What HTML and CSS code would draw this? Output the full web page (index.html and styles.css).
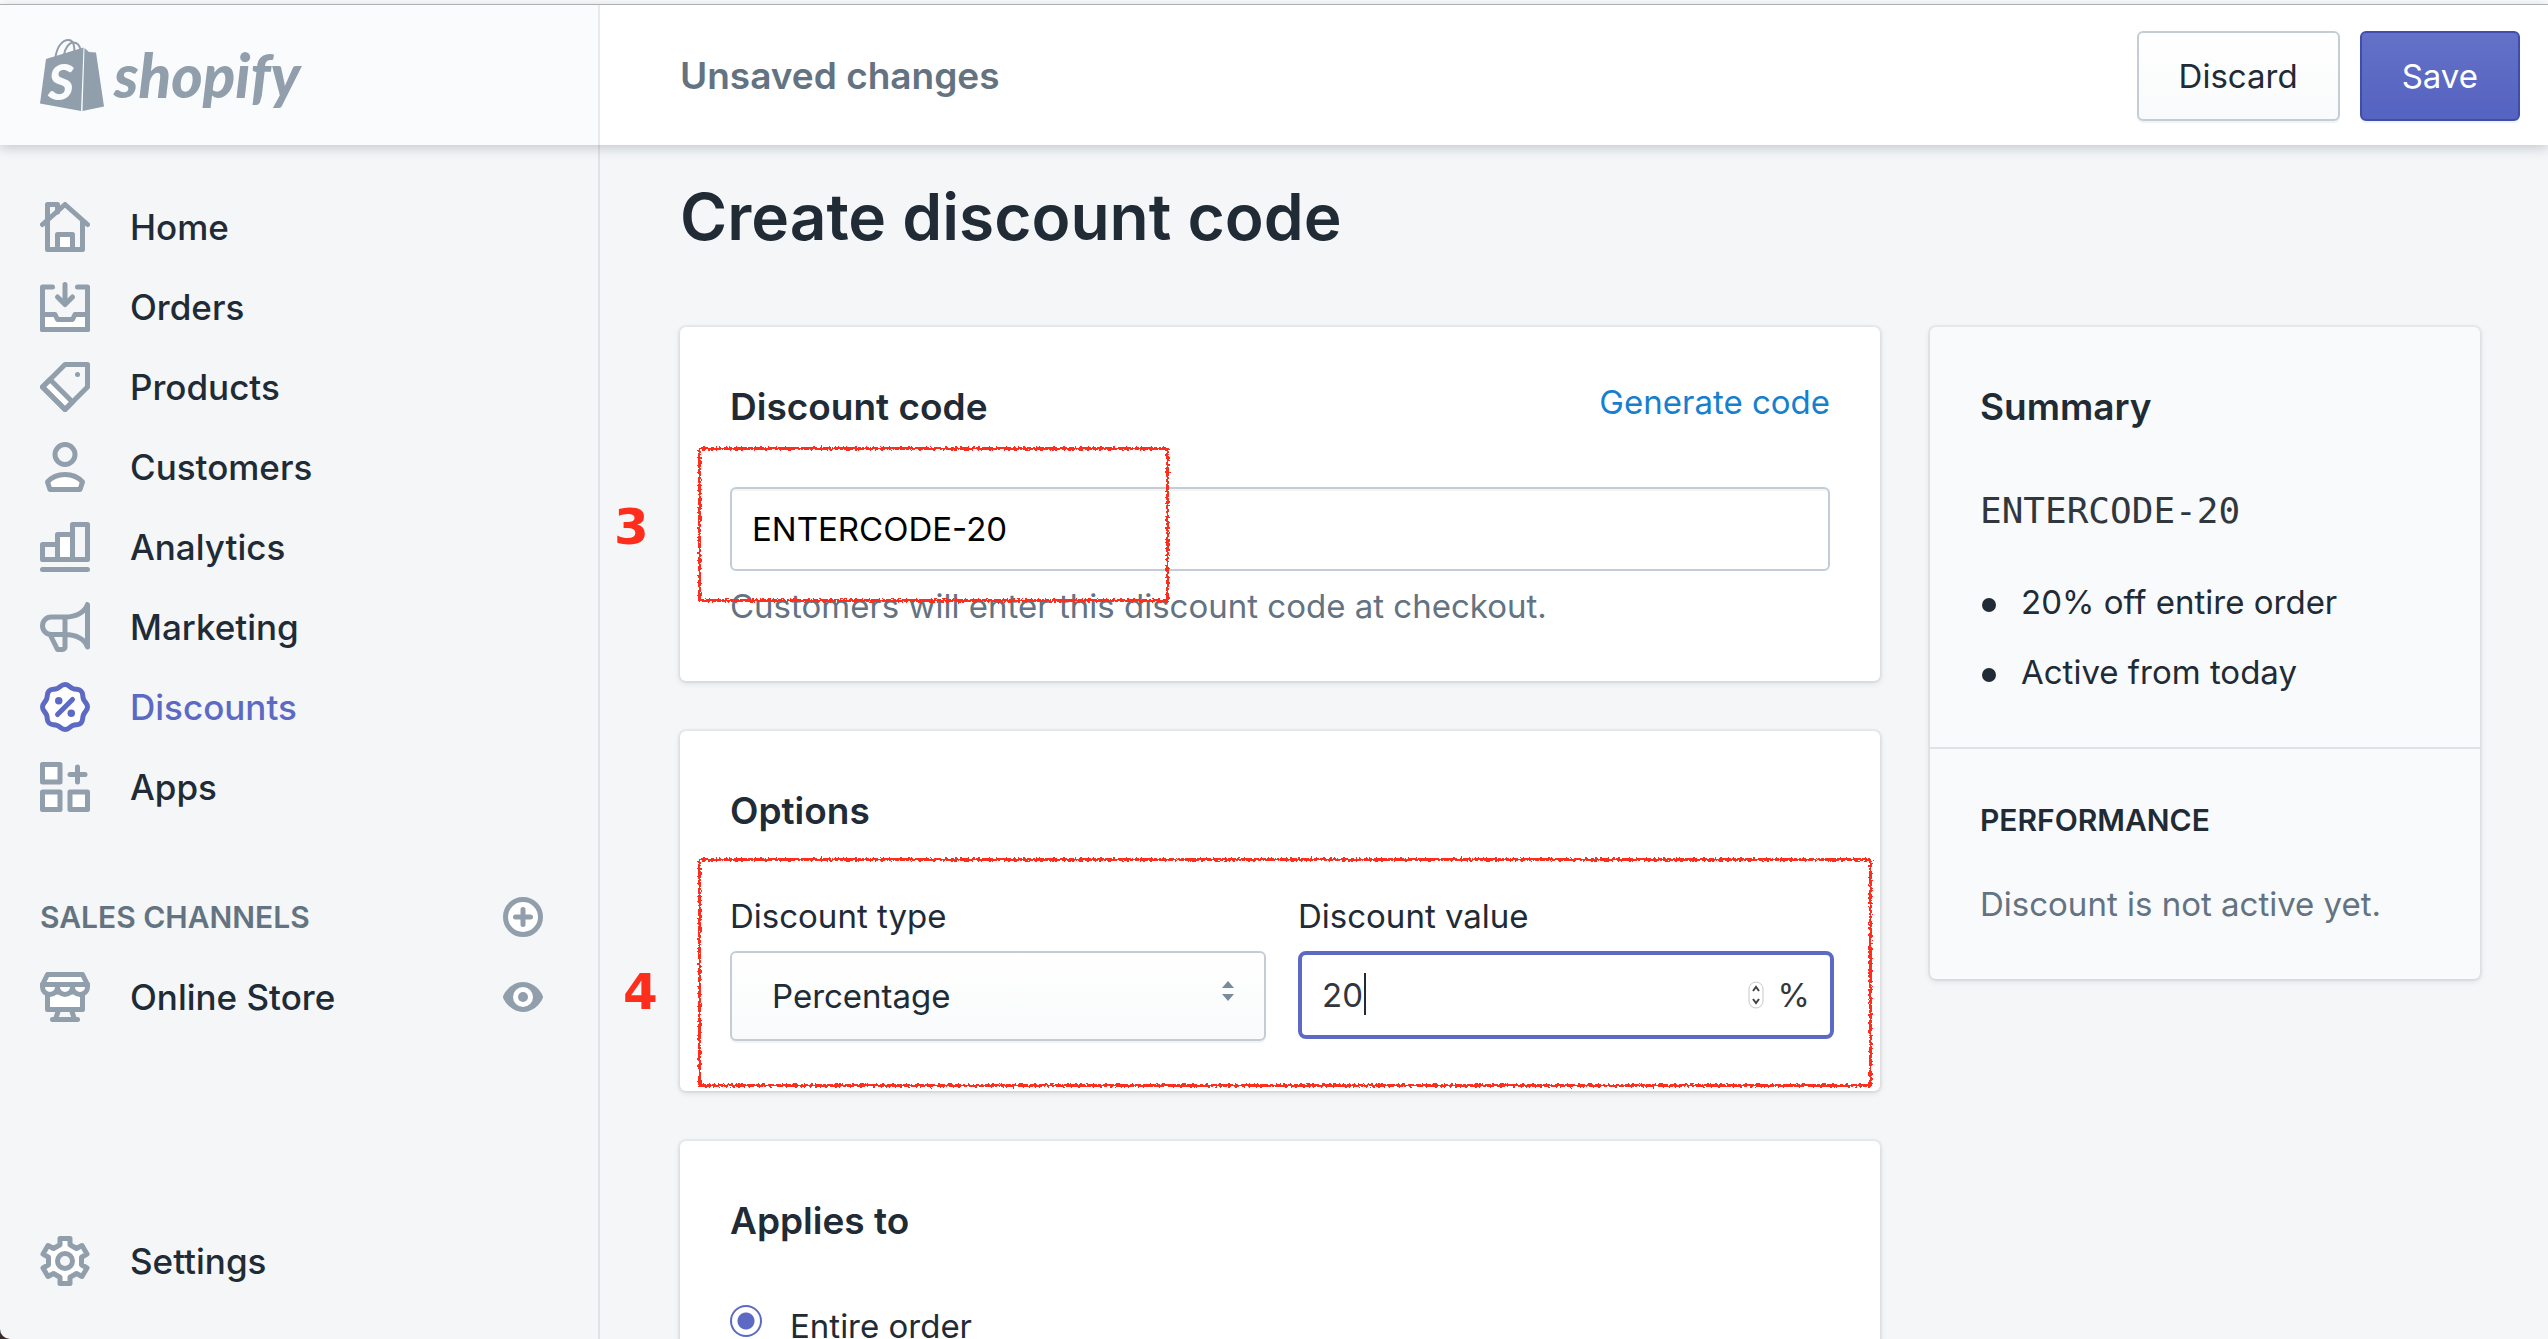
FILE: index.html
```html
<!DOCTYPE html>
<html lang="en">
  <head>
    <meta charset="UTF-8" />
    <meta name="viewport" content="width=device-width, initial-scale=1.0" />
    <title>Create discount code</title>
    <link rel="stylesheet" href="styles.css">
  </head>
  <body>
    <div class="app">
      <header class="topbar">
        <a class="logo" href="#">
          <svg class="logo-bag" viewBox="0 0 64 72" aria-hidden="true">
            <path class="logo-handle" d="M15.500 18C17 8 22 1 28.500 1c4 0 6 4 6 12" />
            <path class="logo-handle" d="M24 16c1-7 5-12.500 9.500-12.500 4 0 6 3 7 7" />
            <path d="M6 20L43.500 8.500 41 72 0 64.500z" />
            <path d="M44.500 9L49 13l7 .5L64 67.500 42.500 72z" />
            <text class="logo-s" x="8" y="61">S</text>
          </svg>
          <span class="logo-name">shopify</span>
        </a>
        <div class="contextual-bar">
          <p class="message">Unsaved changes</p>
          <div class="actions">
            <button class="btn" type="button">Discard</button>
            <button class="btn btn-primary" type="submit" form="discountForm">Save</button>
          </div>
        </div>
      </header>

      <nav class="sidebar">
        <ul class="nav-list">
          <li>
            <a class="nav-item" href="#">
              <svg class="icon" viewBox="0 0 20 20"><path d="M3 8V1h4v3M3 8v11h14V8" /><path d="M1 9l9-8 9 8" /><path class="fill" d="M7 19v-6h6v6z" /></svg>
              Home
            </a>
          </li>
          <li>
            <a class="nav-item" href="#">
              <svg class="icon" viewBox="0 0 20 20"><path class="fill" d="M1 13h5l1 2h6l1-2h5v6H1z" /><path d="M5 2H1v17h18V2h-4M10 1v7M7 6l3 3 3-3" /></svg>
              Orders
            </a>
          </li>
          <li>
            <a class="nav-item" href="#">
              <svg class="icon" viewBox="0 0 20 20"><path class="fill" d="M4 7l9 9-3 3-9-9z" /><path d="M10 1h9v9l-9 9-9-9z" /><circle class="solid" cx="15" cy="5" r="1" /></svg>
              Products
            </a>
          </li>
          <li>
            <a class="nav-item" href="#">
              <svg class="icon" viewBox="0 0 20 20"><circle cx="10" cy="5" r="4" /><path class="fill" d="M3 16c3.500-4 10.500-4 14 0l-1 3H4z" /></svg>
              Customers
            </a>
          </li>
          <li>
            <a class="nav-item" href="#">
              <svg class="icon" viewBox="0 0 20 20"><path d="M1 9h6v6H1zM13 1h6v14h-6zM1 19h18" /><path class="fill" d="M7 5h6v10H7z" /></svg>
              Analytics
            </a>
          </li>
          <li>
            <a class="nav-item" href="#">
              <svg class="icon" viewBox="0 0 20 20"><path d="M19 1v17c-1-3-4.500-5-9-5H4.500a3.500 3.500 0 0 1 0-7H10c4.500 0 8-2 9-5zM10 6v12a1 1 0 0 1-1 1H7l-3-6" /></svg>
              Marketing
            </a>
          </li>
          <li>
            <a class="nav-item active" href="#">
              <svg class="icon" viewBox="0 0 20 20"><path class="fill" d="M10 1C11.500 1 11.600 2 13.100 2.600S15.300 2.600 16.400 3.600 16.800 5.500 17.400 6.900 19 8.500 19 10 18 11.600 17.400 13.100 17.400 15.300 16.400 16.400 14.500 16.800 13.100 17.400 11.500 19 10 19 8.400 18 6.900 17.400 4.700 17.400 3.600 16.400 3.200 14.500 2.600 13.100 1 11.500 1 10 2 8.400 2.600 6.900 2.600 4.700 3.600 3.600 5.500 3.200 6.900 2.600 8.500 1 10 1z" /><path d="M7 13l6-6" /><circle class="solid" cx="7.500" cy="7.500" r="1.500" /><circle class="solid" cx="12.500" cy="12.500" r="1.500" /></svg>
              Discounts
            </a>
          </li>
          <li>
            <a class="nav-item" href="#">
              <svg class="icon" viewBox="0 0 20 20"><path class="fill" d="M1 1h7v7H1zM1 12h7v7H1zM12 12h7v7h-7z" /><path d="M15 2v6M12 5h6" /></svg>
              Apps
            </a>
          </li>
        </ul>

        <div class="nav-heading">
          <h2>Sales channels</h2>
          <button class="icon-btn" type="button" aria-label="Add sales channel">
            <svg class="icon-small" viewBox="0 0 16 16"><circle class="fill" cx="8" cy="8" r="7" /><path d="M8 5v6M5 8h6" /></svg>
          </button>
        </div>
        <div class="nav-channel">
          <a class="nav-item" href="#">
            <svg class="icon" viewBox="0 0 20 20"><path class="fill" d="M3 8v7h14V8z" /><path class="fill" d="M1 5v1a3 3 0 0 0 6 0 3 3 0 0 0 6 0 3 3 0 0 0 6 0V5z" /><path class="fill" d="M3 1h14l2 4H1z" /><path d="M7.500 15L6.500 18M12.500 15l1 3M5 19h10" /></svg>
            Online Store
          </a>
          <button class="icon-btn" type="button" aria-label="View online store">
            <svg class="icon-small" viewBox="0 0 16 16"><path class="solid" d="M8 2C3 2 0 7 0 8s3 6 8 6 8-5 8-6-3-6-8-6z" /><circle class="eye-white" cx="8" cy="8" r="4" /><circle class="solid" cx="8" cy="8" r="2" /></svg>
          </button>
        </div>

        <a class="nav-item nav-settings" href="#">
          <svg class="icon" viewBox="0 0 20 20"><path class="fill" d="M8 1h4v2.500L14.600 5l2.200-1.200 2 3.400-2.200 1.300v3l2.200 1.300-2 3.400-2.200-1.200-2.600 1.500V19H8v-2.500L5.400 15l-2.200 1.200-2-3.400 2.200-1.300v-3L1.200 7.200l2-3.400L5.400 5 8 3.500z" /><circle class="gear-hole" cx="10" cy="10" r="3" /></svg>
          Settings
        </a>
      </nav>

      <main class="content">
        <h1>Create discount code</h1>

        <div class="layout">
          <form class="cards" id="discountForm">
            <section class="card">
              <div class="card-header">
                <h2><label for="code">Discount code</label></h2>
                <a class="link" href="#">Generate code</a>
              </div>
              <input class="text-field" type="text" id="code" value="ENTERCODE-20" />
              <p class="help">Customers will enter this discount code at checkout.</p>
              <span class="step step-code">3</span>
              <div class="mark mark-code"></div>
            </section>

            <section class="card">
              <div class="card-header">
                <h2>Options</h2>
              </div>
              <div class="field-row">
                <div class="field">
                  <label for="type">Discount type</label>
                  <div class="select-wrap">
                    <select class="select" id="type">
                      <option>Percentage</option>
                      <option>Fixed amount</option>
                      <option>Free shipping</option>
                    </select>
                    <svg class="select-arrows" viewBox="0 0 12 20"><path d="M6 0l6 7H0zM6 20l6-7H0z" /></svg>
                  </div>
                </div>
                <div class="field">
                  <label for="value">Discount value</label>
                  <div class="value-field">
                    <input type="number" id="value" value="20" />
                    <span class="caret"></span>
                    <svg class="stepper" viewBox="0 0 16 28"><rect x="1" y="1" width="14" height="26" rx="7" /><path d="M5 10l3-4 3 4M5 18l3 4 3-4" /></svg>
                    <span class="suffix">%</span>
                  </div>
                </div>
              </div>
              <span class="step step-options">4</span>
              <div class="mark mark-options"></div>
            </section>

            <section class="card">
              <div class="card-header">
                <h2>Applies to</h2>
              </div>
              <label class="choice">
                <input type="radio" name="applies" checked />
                Entire order
              </label>
            </section>
          </form>

          <aside class="card summary">
            <div class="summary-section">
              <h2>Summary</h2>
              <p class="summary-code">ENTERCODE-20</p>
              <ul class="summary-list">
                <li>20% off entire order</li>
                <li>Active from today</li>
              </ul>
            </div>
            <div class="summary-section">
              <h3>Performance</h3>
              <p class="subdued">Discount is not active yet.</p>
            </div>
          </aside>
        </div>
      </main>
    </div>

    <!-- Rough pencil edge for the red marks -->
    <svg class="defs" width="0" height="0" aria-hidden="true">
      <filter id="rough">
        <feTurbulence type="fractalNoise" baseFrequency="0.4" numOctaves="2" result="noise" />
        <feDisplacementMap in="SourceGraphic" in2="noise" scale="5" />
      </filter>
    </svg>
  </body>
</html>
```
FILE: styles.css
```css
* {
  box-sizing: border-box;
}

body {
  margin: 0;
  background: #3b2b2a;
  color: #212b36;
  font-family: Inter, "Liberation Sans", sans-serif;
  font-size: 33px;
  line-height: 50px;
}

h1,
h2,
h3,
p,
ul {
  margin: 0;
  padding: 0;
}

ul {
  list-style: none;
}

a {
  text-decoration: none;
}

button,
input,
select {
  font-family: inherit;
  font-size: inherit;
  color: inherit;
}

.app {
  display: grid;
  grid-template-columns: 600px 1fr;
  grid-template-rows: auto 1fr;
  height: 100vh;
  overflow: hidden;
  padding-top: 4px;
  background: linear-gradient(#fff 4px, #f4f6f8 4px);
  border-bottom-left-radius: 10px;
}

/* Top bar */
.topbar {
  grid-column: 1 / -1;
  display: grid;
  grid-template-columns: subgrid;
  border-top: 1px solid #adb1b5;
  background: #fff;
  box-shadow: 0 2px 12px rgba(33, 43, 54, 0.25);
  z-index: 1;
}

.logo {
  display: flex;
  align-items: center;
  gap: 10px;
  height: 140px;
  padding-left: 40px;
  background: #fafbfd;
  border-right: 2px solid #e8eaed;
  color: #919eab;
}

.logo-bag {
  width: 64px;
  height: 72px;
  fill: #919eab;
  overflow: visible;
}

.logo-handle {
  fill: none;
  stroke: #919eab;
  stroke-width: 2;
}

.logo-s {
  fill: #fafbfd;
  font: italic 900 50px Lato, sans-serif;
}

.logo-name {
  font: italic 900 60px/70px Lato, sans-serif;
}

.contextual-bar {
  display: flex;
  align-items: center;
  justify-content: space-between;
  padding: 2px 28px 0 80px;
}

.message {
  color: #637381;
  font-size: 37px;
  font-weight: 600;
}

.actions {
  display: flex;
  gap: 20px;
}

.btn {
  height: 90px;
  padding: 0 40px;
  border: 2px solid #c4cdd5;
  border-radius: 6px;
  background: linear-gradient(#fff, #f9fafb);
  box-shadow: 0 2px 0 rgba(22, 29, 37, 0.05);
  cursor: pointer;
}

.btn-primary {
  border-color: #3f4eae;
  background: linear-gradient(#6371c7, #5563c1);
  color: #fff;
}

/* Sidebar */
.sidebar {
  display: flex;
  flex-direction: column;
  padding: 42px 0 38px;
  border-right: 2px solid #dfe3e8;
}

.nav-item {
  display: flex;
  align-items: center;
  gap: 40px;
  height: 80px;
  padding-left: 40px;
  color: #212b36;
  font-size: 35px;
  font-weight: 500;
}

.nav-item.active {
  color: #5c6ac4;
}

.icon,
.icon-small {
  flex: none;
  fill: none;
  stroke: #919eab;
  stroke-width: 2;
  stroke-linecap: round;
  stroke-linejoin: round;
}

.icon {
  width: 50px;
  height: 50px;
}

.icon-small {
  display: block;
  width: 40px;
  height: 40px;
}

.fill {
  fill: #fff;
}

.solid {
  fill: #919eab;
  stroke: none;
}

.eye-white {
  fill: #fff;
  stroke: none;
}

.gear-hole {
  fill: #f4f6f8;
}

.active .icon {
  stroke: #5c6ac4;
}

.active .solid {
  fill: #5c6ac4;
}

.nav-heading,
.nav-channel {
  display: flex;
  align-items: center;
  justify-content: space-between;
  height: 80px;
  padding-right: 55px;
}

.nav-heading {
  margin-top: 50px;
  padding-left: 40px;
}

.nav-heading h2 {
  color: #637381;
  font-size: 30px;
  font-weight: 600;
  text-transform: uppercase;
}

.icon-btn {
  padding: 0;
  border: none;
  background: none;
  cursor: pointer;
}

.nav-settings {
  margin-top: auto;
}

/* Page */
.content {
  overflow-y: auto;
  scrollbar-width: none;
  padding: 40px 68px 50px 80px;
}

h1 {
  margin-bottom: 78px;
  font-size: 64px;
  font-weight: 600;
  line-height: 64px;
}

h2 {
  font-size: 37px;
  font-weight: 600;
  line-height: 60px;
}

.layout {
  display: grid;
  grid-template-columns: 1fr 550px;
  align-items: start;
  gap: 50px;
}

.cards {
  display: grid;
  gap: 50px;
}

.card {
  position: relative;
  padding: 50px;
  border-radius: 6px;
  background: #fff;
  box-shadow: 0 0 0 2px rgba(63, 63, 68, 0.05), 0 2px 6px rgba(63, 63, 68, 0.15);
}

.card-header {
  display: flex;
  justify-content: space-between;
  margin-bottom: 50px;
}

.link {
  color: #1680cf;
}

.text-field {
  display: block;
  width: 100%;
  height: 84px;
  padding: 0 20px;
  border: 2px solid #c4cdd5;
  border-radius: 6px;
  background: #fff;
  box-shadow: inset 0 2px 0 rgba(99, 115, 129, 0.08);
  color: #000;
}

.help {
  margin-top: 10px;
}

.help,
.subdued {
  color: #637381;
}

.field-row {
  display: grid;
  grid-template-columns: repeat(2, minmax(0, 1fr));
  gap: 32px;
  margin-right: -4px;
}

.field label {
  display: block;
  margin-bottom: 10px;
}

.select-wrap {
  position: relative;
}

.select {
  appearance: none;
  display: block;
  width: 100%;
  height: 90px;
  padding: 0 40px;
  border: 2px solid #c4cdd5;
  border-radius: 6px;
  background: linear-gradient(#fff, #f9fafb);
  box-shadow: 0 2px 0 rgba(22, 29, 37, 0.05);
}

.select-arrows {
  position: absolute;
  top: 30px;
  right: 32px;
  width: 12px;
  height: 20px;
  fill: #798c9c;
  pointer-events: none;
}

.value-field {
  position: relative;
  display: flex;
  align-items: center;
  height: 88px;
  padding: 0 20px;
  border: 4px solid #5c6ac4;
  border-radius: 8px;
  background: #fff;
  color: #31373d;
}

.value-field input {
  appearance: textfield;
  flex: 1;
  min-width: 0;
  padding: 0;
  border: none;
  outline: none;
  background: none;
}

.value-field input::-webkit-inner-spin-button {
  display: none;
}

.caret {
  position: absolute;
  top: 18px;
  left: 62px;
  width: 2px;
  height: 42px;
  background: #212b36;
}

.stepper {
  width: 16px;
  height: 28px;
  margin-right: 14px;
  fill: #fff;
  stroke: #c9c9c9;
}

.stepper path {
  fill: none;
  stroke: #444;
  stroke-width: 2;
}

.choice {
  display: flex;
  gap: 28px;
}

.choice input {
  appearance: none;
  width: 32px;
  height: 32px;
  margin: 4px 0 0;
  border: 2px solid #5c6ac4;
  border-radius: 50%;
  background: radial-gradient(circle, #5c6ac4 8px, #fff 9px);
}

/* Summary */
.summary {
  padding: 0;
  background: #f9fafc;
}

.summary-section {
  padding: 50px;
}

.summary-section + .summary-section {
  border-top: 2px solid #dfe3e8;
}

.summary-code {
  margin: 54px 0 46px;
  color: #31373d;
  font-family: "DejaVu Sans Mono", monospace;
  font-size: 36px;
  line-height: 40px;
}

.summary-list {
  display: grid;
  gap: 20px;
}

.summary-list li {
  display: flex;
  align-items: center;
  gap: 25px;
}

.summary-list li::before {
  content: "";
  width: 14px;
  height: 14px;
  margin: 6px 0 0 2px;
  border-radius: 50%;
  background: #212b36;
}

h3 {
  margin-bottom: 38px;
  font-size: 30px;
  font-weight: 600;
  line-height: 42px;
  text-transform: uppercase;
}

/* Tutorial marks drawn over the cards */
.mark {
  position: absolute;
  border: 3px solid #ff2d1c;
  filter: url(#rough);
  pointer-events: none;
}

.mark-code {
  top: 120px;
  left: 18px;
  width: 471px;
  height: 155px;
}

.mark-options {
  top: 127px;
  left: 18px;
  right: 8px;
  bottom: 4px;
}

.step {
  position: absolute;
  color: #ff2d1c;
  font: bold 50px/60px "DejaVu Sans", sans-serif;
}

.step-code {
  top: 170px;
  left: -66px;
}

.step-options {
  top: 231px;
  left: -57px;
}

.defs {
  position: absolute;
}
```
